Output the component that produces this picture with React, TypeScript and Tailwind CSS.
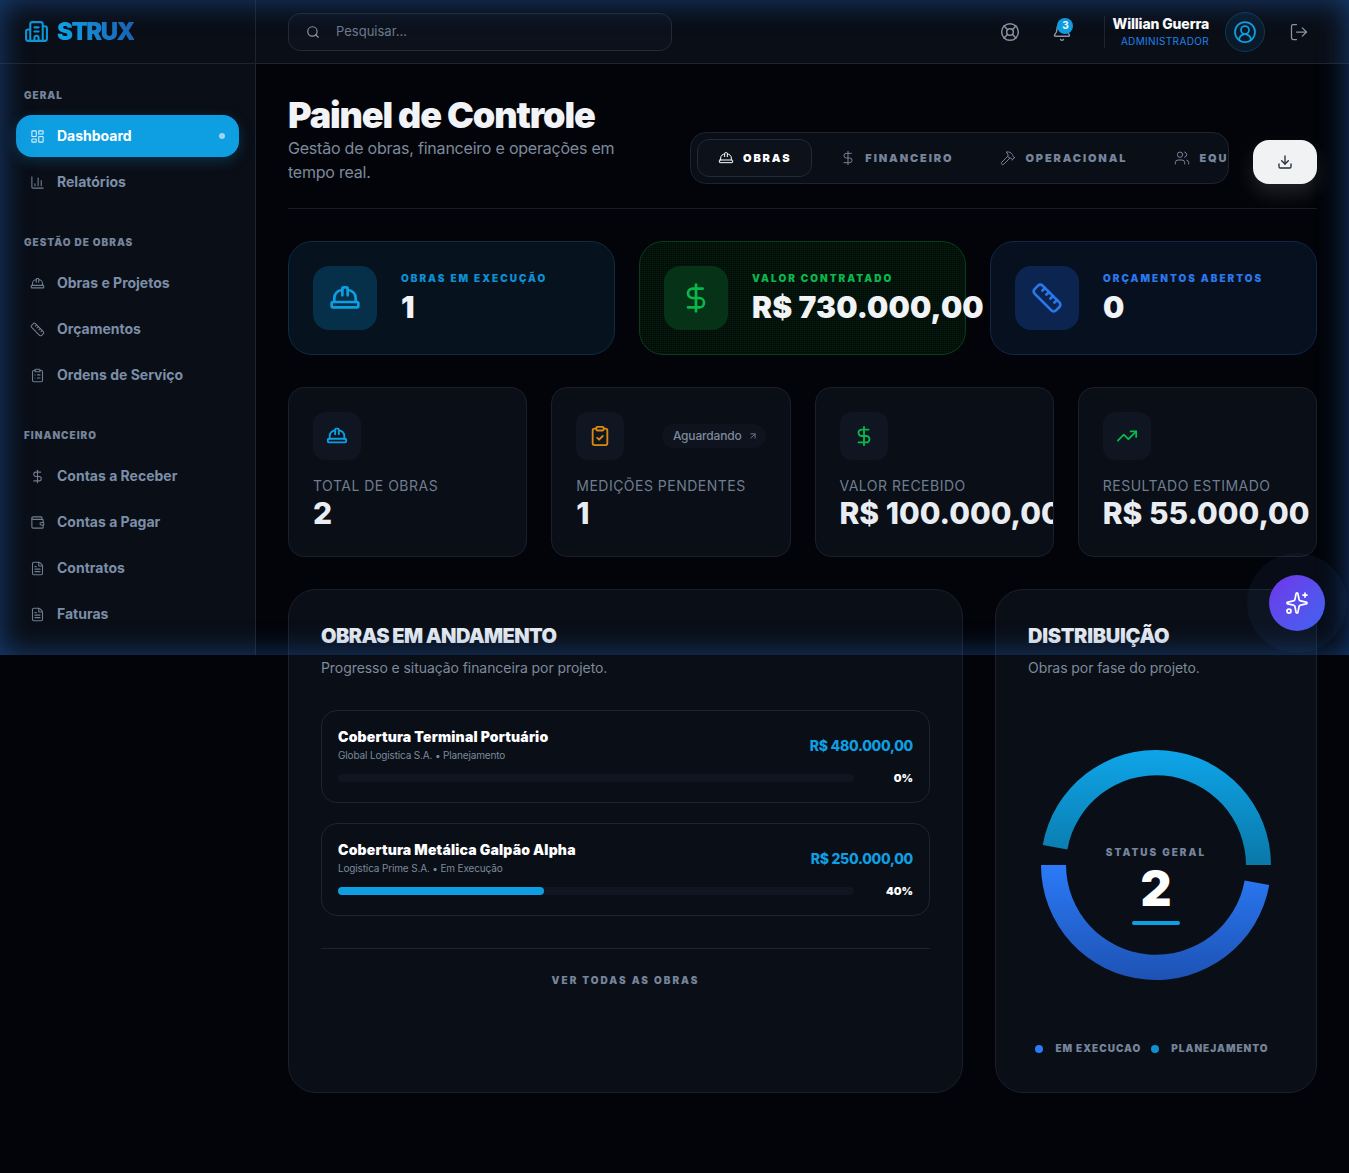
import {
  ArrowUpRight,
  Bell,
  Building2,
  ChartColumn,
  CircleUserRound,
  ClipboardCheck,
  ClipboardList,
  DollarSign,
  Download,
  FileText,
  Hammer,
  HardHat,
  LayoutDashboard,
  LifeBuoy,
  LogOut,
  Ruler,
  Search,
  Sparkles,
  TrendingUp,
  Users,
  Wallet,
} from "lucide-react";

const navGroups = [
  {
    title: "GERAL",
    items: [
      { label: "Dashboard", icon: LayoutDashboard, active: true },
      { label: "Relatórios", icon: ChartColumn },
    ],
  },
  {
    title: "GESTÃO DE OBRAS",
    items: [
      { label: "Obras e Projetos", icon: HardHat },
      { label: "Orçamentos", icon: Ruler },
      { label: "Ordens de Serviço", icon: ClipboardList },
    ],
  },
  {
    title: "FINANCEIRO",
    items: [
      { label: "Contas a Receber", icon: DollarSign },
      { label: "Contas a Pagar", icon: Wallet },
      { label: "Contratos", icon: FileText },
      { label: "Faturas", icon: FileText },
    ],
  },
];

function Sidebar() {
  return (
    <aside className="w-[256px] h-[655px] shrink-0 bg-[#0a0e16] border-r border-[#1d2431] flex flex-col overflow-hidden">
      <div className="h-[64px] shrink-0 border-b border-[#1d2431] flex items-center pl-6 gap-2">
        <Building2 size={25} strokeWidth={2} className="text-[#0d97d8]" />
        <span className="text-[24px] font-black tracking-[-0.065em] bg-gradient-to-r from-[#0ea5e9] to-[#1a62b4] bg-clip-text text-transparent">
          STRUX
        </span>
      </div>
      <nav className="flex flex-col px-4 pt-6 gap-8">
        {navGroups.map((group) => (
          <div key={group.title} className="flex flex-col">
            <div className="pl-2 text-[10px] leading-[15px] font-black tracking-[0.1em] text-[#75849b] mb-3">
              {group.title}
            </div>
            <div className="flex flex-col gap-1">
              {group.items.map((item) => (
                <div
                  key={item.label}
                  className={
                    item.active
                      ? "h-[42px] rounded-2xl bg-[#0e9fe2] flex items-center pl-[14px] pr-3 gap-3 text-white shadow-[0_4px_14px_rgba(14,159,226,0.25)]"
                      : "h-[42px] rounded-2xl flex items-center pl-[14px] pr-3 gap-3 text-[#7c8ea8]"
                  }
                >
                  <item.icon size={15} strokeWidth={1.75} className={item.active ? "text-[#d7eefb]" : "text-[#6f7d90]"} />
                  <span className="text-[14px] font-bold -translate-y-px">{item.label}</span>
                  {item.active && <span className="ml-auto mr-[2px] w-[6px] h-[6px] rounded-full bg-[#9fd5f3]" />}
                </div>
              ))}
            </div>
          </div>
        ))}
      </nav>
    </aside>
  );
}

function Header() {
  return (
    <header className="h-[64px] shrink-0 bg-[#0a0e16] border-b border-[#1d2431] flex items-center pl-8 pr-10">
      <div className="w-[384px] h-[38px] rounded-xl border border-[#232b38] bg-[#0c111b] flex items-center pl-[17px] gap-4">
        <Search size={14} className="text-[#8a96a8]" />
        <span className="text-[13px] pt-px text-[#6d7a8d]">Pesquisar...</span>
      </div>
      <div className="ml-auto flex items-center">
        <LifeBuoy size={20} strokeWidth={1.75} className="text-[#8b95a5]" />
        <div className="relative ml-8">
          <Bell size={20} strokeWidth={1.75} className="text-[#8b95a5]" />
          <span className="absolute -top-[4px] left-[5px] w-4 h-4 rounded-full bg-[#0e9fe2] text-white text-[10px] font-bold flex items-center justify-center">
            3
          </span>
        </div>
        <div className="w-px h-8 bg-[#1d2431] ml-8" />
        <div className="ml-[7px] pt-px flex flex-col items-end">
          <span className="text-[14px] leading-[18px] font-extrabold tracking-[-0.01em] text-white">Willian Guerra</span>
          <span className="text-[10px] leading-[16px] tracking-[0.035em] text-[#1f82ea]">ADMINISTRADOR</span>
        </div>
        <div className="ml-4 w-10 h-10 rounded-full bg-[#0b1a2a] border border-[#0e3a58] flex items-center justify-center">
          <CircleUserRound size={24} strokeWidth={1.75} className="text-[#0e9fe2]" />
        </div>
        <LogOut size={20} strokeWidth={1.5} className="ml-6 text-[#8b95a5]" />
      </div>
    </header>
  );
}

const tabs = [
  { label: "OBRAS", icon: HardHat, active: true },
  { label: "FINANCEIRO", icon: DollarSign },
  { label: "OPERACIONAL", icon: Hammer },
  { label: "EQUIPE", icon: Users },
];

function Title() {
  return (
    <div className="flex items-end justify-between pb-6 border-b border-[#171c26]">
      <div className="w-[340px]">
        <h1 className="text-[36px] leading-[40px] -mt-px pb-px font-black tracking-[-0.031em] text-[#f1f3f6] whitespace-nowrap">
          Painel de Controle
        </h1>
        <p className="text-[16px] leading-[24px] tracking-[-0.0135em] text-[#7d8a9c]">
          Gestão de obras, financeiro e operações em tempo real.
        </p>
      </div>
      <div className="flex items-end gap-6">
        <div className="w-[539px] h-[52px] rounded-2xl border border-[#1d2431] bg-[#0a0e16] flex items-center pl-[6px] gap-[7px] overflow-hidden">
          {tabs.map((tab) => (
            <div
              key={tab.label}
              className={
                tab.active
                  ? "h-[38px] shrink-0 mr-px rounded-xl border border-[#232b38] bg-[#0c111a] px-5 flex items-center gap-[9px] text-white"
                  : "h-[38px] shrink-0 px-5 flex items-center gap-[9px] text-[#75849b]"
              }
            >
              <tab.icon size={16} strokeWidth={1.5} />
              <span className="text-[11px] font-black tracking-[0.17em]">{tab.label}</span>
            </div>
          ))}
        </div>
        <div className="w-[64px] h-[44px] rounded-2xl bg-[#f1f2f4] flex items-center justify-center shadow-[0_10px_20px_rgba(255,255,255,0.12)]">
          <Download size={16} strokeWidth={2} className="text-[#252b36]" />
        </div>
      </div>
    </div>
  );
}

const kpis = [
  {
    label: "OBRAS EM EXECUÇÃO",
    value: "1",
    icon: HardHat,
    card: "bg-[#06121e] border-[#0c2c42]",
    box: "bg-[#06304a] text-[#0e9fe2]",
    text: "text-[#0e8fd2]",
  },
  {
    label: "VALOR CONTRATADO",
    value: "R$ 730.000,00",
    icon: DollarSign,
    card: "bg-[conic-gradient(#02060a_25%,#03170a_0)] bg-[length:2px_2px] border-[#0a3c1c]",
    box: "bg-[#063318] text-[#0ab84a]",
    text: "text-[#0ab84a]",
  },
  {
    label: "ORÇAMENTOS ABERTOS",
    value: "0",
    icon: Ruler,
    card: "bg-[#07101f] border-[#10274a]",
    box: "bg-[#0c2550] text-[#2a78ec]",
    text: "text-[#2a78ec]",
  },
];

const stats = [
  { label: "TOTAL DE OBRAS", value: "2", icon: HardHat, color: "text-[#0e9fe2]" },
  { label: "MEDIÇÕES PENDENTES", value: "1", icon: ClipboardCheck, color: "text-[#d98a0e]", badge: "Aguardando" },
  { label: "VALOR RECEBIDO", value: "R$ 100.000,00", icon: DollarSign, color: "text-[#0ab84a]" },
  { label: "RESULTADO ESTIMADO", value: "R$ 55.000,00", icon: TrendingUp, color: "text-[#0ab84a]" },
];

const works = [
  {
    name: "Cobertura Terminal Portuário",
    client: "Global Logistica S.A. • Planejamento",
    amount: "R$ 480.000,00",
    pct: 0,
  },
  {
    name: "Cobertura Metálica Galpão Alpha",
    client: "Logistica Prime S.A. • Em Execução",
    amount: "R$ 250.000,00",
    pct: 40,
  },
];

function Donut() {
  return (
    <svg width="240" height="240" viewBox="0 0 240 240">
      <defs>
        <linearGradient id="donutTop" x1="0" y1="0" x2="0" y2="1">
          <stop offset="0" stopColor="#0ea5e9" />
          <stop offset="1" stopColor="#0a78a8" />
        </linearGradient>
        <linearGradient id="donutBottom" x1="0" y1="0" x2="0" y2="1">
          <stop offset="0" stopColor="#2b7af7" />
          <stop offset="1" stopColor="#1d52b4" />
        </linearGradient>
      </defs>
      <path
        d="M235 120 A115 115 0 0 0 6.75 100 L31.4 104.4 A90 90 0 0 1 210 120 Z"
        fill="url(#donutTop)"
      />
      <path
        d="M5 120 A115 115 0 0 0 233.25 140 L208.6 135.6 A90 90 0 0 1 30 120 Z"
        fill="url(#donutBottom)"
      />
    </svg>
  );
}

function App() {
  return (
    <div className="relative w-full h-[1173px] overflow-hidden bg-[#030409] font-['Inter',sans-serif]">
      <div className="flex">
        <Sidebar />
        <div className="flex-1 min-w-0 flex flex-col">
          <Header />
          <main className="pt-8 pl-8 pr-8 flex flex-col">
            <Title />

            <div className="grid grid-cols-3 gap-6 mt-8">
              {kpis.map((k) => (
                <div key={k.label} className={"h-[114px] rounded-3xl border flex items-center pl-6 gap-6 " + k.card}>
                  <div className={"w-16 h-16 shrink-0 rounded-2xl flex items-center justify-center " + k.box}>
                    <k.icon size={32} strokeWidth={2} />
                  </div>
                  <div className="flex flex-col whitespace-nowrap">
                    <span className={"text-[10px] leading-[15px] font-black tracking-[0.2em] " + k.text}>{k.label}</span>
                    <span className="text-[30px] leading-[36px] mt-[3px] font-black tracking-[0.005em] text-[#f1f3f6]">{k.value}</span>
                  </div>
                </div>
              ))}
            </div>

            <div className="grid grid-cols-4 gap-6 mt-8">
              {stats.map((s) => (
                <div key={s.label} className="h-[170px] rounded-2xl border border-[#1a202b] bg-[#0a0e16] p-6 overflow-hidden">
                  <div className="flex items-center justify-between">
                    <div className={"w-12 h-12 rounded-xl bg-[#0f1621] flex items-center justify-center " + s.color}>
                      <s.icon size={22} strokeWidth={2} />
                    </div>
                    {s.badge && (
                      <div className="h-6 rounded-full bg-[#0e131d] pl-[11px] pr-2 flex items-center gap-[6px] text-[#7d8a9c]">
                        <span className="text-[12px] font-medium tracking-[-0.015em]">{s.badge}</span>
                        <ArrowUpRight size={10} />
                      </div>
                    )}
                  </div>
                  <div className="mt-4 text-[14px] leading-[20px] tracking-[0.035em] text-[#6f7d90] whitespace-nowrap">{s.label}</div>
                  <div className="-mt-px text-[30px] leading-[36px] font-extrabold text-[#e9edf2] whitespace-nowrap">{s.value}</div>
                </div>
              ))}
            </div>

            <div className="flex gap-8 mt-8">
              <section className="w-[675px] h-[504px] rounded-[28px] border border-[#1a202b] bg-[#0a0e16] p-8">
                <h2 className="text-[20px] leading-[28px] font-black tracking-[-0.03em] text-[#e9edf2]">OBRAS EM ANDAMENTO</h2>
                <p className="mt-2 text-[14px] leading-[20px] tracking-[-0.005em] text-[#7d8a9c]">Progresso e situação financeira por projeto.</p>
                <div className="mt-8 flex flex-col gap-5">
                  {works.map((w) => (
                    <div key={w.name} className="h-[93px] rounded-2xl border border-[#1d2431] px-4 pt-4">
                      <div className="flex items-center justify-between">
                        <div>
                          <div className="text-[14px] leading-[20px] font-black tracking-[0.012em] text-white">{w.name}</div>
                          <div className="mt-px text-[10px] leading-[15px] tracking-[-0.015em] text-[#7d8a9c]">{w.client}</div>
                        </div>
                        <div className="text-[14px] font-extrabold tracking-[-0.02em] text-[#0e9fe2]">{w.amount}</div>
                      </div>
                      <div className="mt-[7px] flex items-center justify-between">
                        <div className="w-[516px] h-2 rounded-full bg-[#0f1621]">
                          <div className="h-2 rounded-full bg-[#0e9fe2]" style={{ width: w.pct + "%" }} />
                        </div>
                        <span className="text-[11px] font-black text-white">{w.pct}%</span>
                      </div>
                    </div>
                  ))}
                </div>
                <div className="mt-8 border-t border-[#1d2431] pt-6 text-center text-[10px] leading-[15px] font-black tracking-[0.2em] text-[#75849b]">
                  VER TODAS AS OBRAS
                </div>
              </section>

              <section className="flex-1 h-[504px] rounded-[28px] border border-[#1a202b] bg-[#0a0e16] p-8 flex flex-col">
                <h2 className="text-[20px] leading-[28px] font-black tracking-[-0.015em] text-[#e9edf2]">DISTRIBUIÇÃO</h2>
                <p className="mt-2 text-[14px] leading-[20px] tracking-[-0.005em] text-[#7d8a9c]">Obras por fase do projeto.</p>
                <div className="relative mt-[67px] flex justify-center">
                  <Donut />
                  <div className="absolute inset-0 pt-[100px] flex flex-col items-center">
                    <span className="text-[10px] leading-[15px] font-black tracking-[0.2em] text-[#75849b]">STATUS GERAL</span>
                    <span className="mt-[5px] text-[48px] leading-[48px] font-black text-white">2</span>
                    <span className="mt-2 w-12 h-1 rounded-full bg-[#0e9fe2]" />
                  </div>
                </div>
                <div className="mt-[56px] pr-2 flex items-center justify-center text-[10px] font-black tracking-[0.1em] text-[#75849b]">
                  <span className="w-2 h-2 rounded-full bg-[#2b7af7] mr-3" />
                  <span>EM EXECUCAO</span>
                  <span className="w-2 h-2 rounded-full bg-[#0e8fd2] ml-[10px] mr-3" />
                  <span>PLANEJAMENTO</span>
                </div>
              </section>
            </div>
          </main>
        </div>
      </div>

      <div className="absolute top-0 left-0 right-0 h-[655px] pointer-events-none shadow-[inset_0_0_30px_rgba(30,90,170,0.65)]" />

      <div className="absolute left-[1269px] top-[575px] w-14 h-14 rounded-full bg-gradient-to-br from-[#6d35ea] to-[#3b62f0] flex items-center justify-center text-white shadow-[0_0_0_22px_rgba(40,70,130,0.12)]">
        <Sparkles size={24} strokeWidth={1.75} />
      </div>
    </div>
  );
}

export default App;
